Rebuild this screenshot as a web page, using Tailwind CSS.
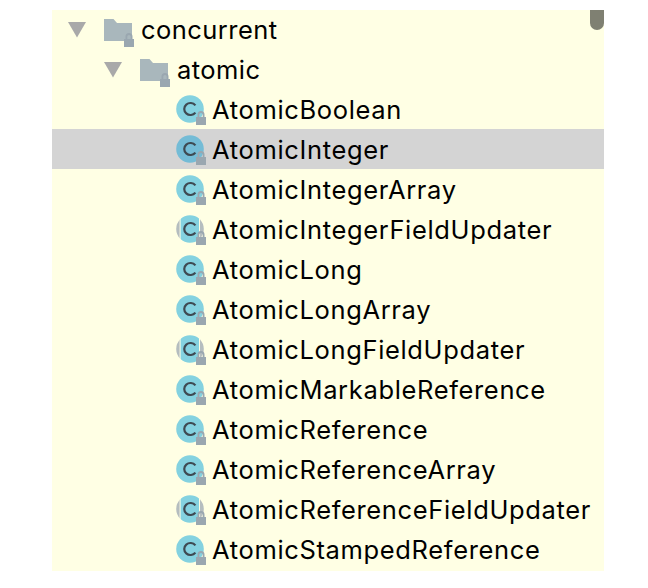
<!DOCTYPE html>
<html lang="en">
<head>
  <meta charset="UTF-8">
  <title>atomic</title>
  <script src="https://cdn.jsdelivr.net/npm/@tailwindcss/browser@4"></script>
</head>
<body class="bg-white">
  <svg class="absolute w-0 h-0" xmlns="http://www.w3.org/2000/svg">
    <defs>
      <clipPath id="band"><rect x="4.6" y="0" width="18.4" height="28"/></clipPath>
      <clipPath id="sides"><rect x="0" y="0" width="3.6" height="28"/><rect x="24" y="0" width="6" height="28"/></clipPath>
      <symbol id="arrow" viewBox="0 0 18 16"><path d="M0 0H18L9 15.5Z" fill="#a9a9a9"/></symbol>
      <symbol id="lock" viewBox="0 0 10 14"><path d="M2.4 7V3.6a2.6 2.6 0 0 1 5.2 0V7" fill="none" stroke="#9aa7b0" stroke-width="1.8"/><rect y="6" width="10" height="8" fill="#9aa7b0"/></symbol>
      <symbol id="folder" viewBox="0 0 30 28">
        <path d="M0 0H9.5L13 4H28V22H0Z" fill="#a9b7bc"/>
        <use href="#lock" x="20" y="14" width="10" height="14"/>
      </symbol>
      <symbol id="cls" viewBox="0 0 30 30">
        <circle cx="14" cy="14" r="13.8" fill="#84d2e0"/>
        <path d="M19.4 10.4a6.2 6 0 1 0 0 7.2" fill="none" stroke="#3e4a52" stroke-width="2.2"/>
        <use href="#lock" x="20" y="16" width="10" height="14"/>
      </symbol>
      <symbol id="cls-sel" viewBox="0 0 30 30">
        <circle cx="14" cy="14" r="13.8" fill="#74bcd6"/>
        <path d="M19.4 10.4a6.2 6 0 1 0 0 7.2" fill="none" stroke="#3e4a52" stroke-width="2.2"/>
        <use href="#lock" x="20" y="16" width="10" height="14"/>
      </symbol>
      <symbol id="cls-abs" viewBox="0 0 30 30">
        <circle cx="14" cy="14" r="13.8" fill="#b5bdbf" clip-path="url(#sides)"/>
        <circle cx="14" cy="14" r="13.8" fill="#84d2e0" clip-path="url(#band)"/>
        <path d="M19.4 10.4a6.2 6 0 1 0 0 7.2" fill="none" stroke="#3e4a52" stroke-width="2.2"/>
        <use href="#lock" x="20" y="16" width="10" height="14"/>
      </symbol>
    </defs>
  </svg>

  <div class="pt-[10px] pl-[52px]">
    <div class="relative w-[552px] h-[561px] bg-[#ffffe4] font-['Inter','Liberation_Sans',sans-serif] text-[25.5px] tracking-[0.65px] text-black">
      <div class="absolute top-0 right-0 w-[14px] h-[20px] bg-[#7f8072] rounded-b-[7px]"></div>

      <div class="flex items-center h-10 pl-4">
        <svg class="w-[18px] h-[16px] mr-[18px]"><use href="#arrow"/></svg>
        <svg class="w-[30px] h-[28px] mt-[6px] mr-[7px]"><use href="#folder"/></svg>
        <span class="mt-[1px] tracking-[0.45px]">concurrent</span>
      </div>
      <div class="flex items-center h-10 pl-[52px] mb-[-1px]">
        <svg class="w-[18px] h-[16px] mr-[18px]"><use href="#arrow"/></svg>
        <svg class="w-[30px] h-[28px] mt-[6px] mr-[7px]"><use href="#folder"/></svg>
        <span class="mt-[1px] tracking-[0.45px]">atomic</span>
      </div>

      <div class="flex items-center h-10 pl-[124px] gap-[6px]"><svg class="w-[30px] h-[30px] mt-[2px]"><use href="#cls"/></svg><span class="mt-[2px]">AtomicBoolean</span></div>
      <div class="flex items-center h-10 pl-[124px] gap-[6px] bg-[#d4d4d4]"><svg class="w-[30px] h-[30px] mt-[2px]"><use href="#cls-sel"/></svg><span class="mt-[2px]">AtomicInteger</span></div>
      <div class="flex items-center h-10 pl-[124px] gap-[6px]"><svg class="w-[30px] h-[30px] mt-[2px]"><use href="#cls"/></svg><span class="mt-[2px]">AtomicIntegerArray</span></div>
      <div class="flex items-center h-10 pl-[124px] gap-[6px]"><svg class="w-[30px] h-[30px] mt-[2px]"><use href="#cls-abs"/></svg><span class="mt-[2px]">AtomicIntegerFieldUpdater</span></div>
      <div class="flex items-center h-10 pl-[124px] gap-[6px]"><svg class="w-[30px] h-[30px] mt-[2px]"><use href="#cls"/></svg><span class="mt-[2px]">AtomicLong</span></div>
      <div class="flex items-center h-10 pl-[124px] gap-[6px]"><svg class="w-[30px] h-[30px] mt-[2px]"><use href="#cls"/></svg><span class="mt-[2px]">AtomicLongArray</span></div>
      <div class="flex items-center h-10 pl-[124px] gap-[6px]"><svg class="w-[30px] h-[30px] mt-[2px]"><use href="#cls-abs"/></svg><span class="mt-[2px]">AtomicLongFieldUpdater</span></div>
      <div class="flex items-center h-10 pl-[124px] gap-[6px]"><svg class="w-[30px] h-[30px] mt-[2px]"><use href="#cls"/></svg><span class="mt-[2px]">AtomicMarkableReference</span></div>
      <div class="flex items-center h-10 pl-[124px] gap-[6px]"><svg class="w-[30px] h-[30px] mt-[2px]"><use href="#cls"/></svg><span class="mt-[2px]">AtomicReference</span></div>
      <div class="flex items-center h-10 pl-[124px] gap-[6px]"><svg class="w-[30px] h-[30px] mt-[2px]"><use href="#cls"/></svg><span class="mt-[2px]">AtomicReferenceArray</span></div>
      <div class="flex items-center h-10 pl-[124px] gap-[6px]"><svg class="w-[30px] h-[30px] mt-[2px]"><use href="#cls-abs"/></svg><span class="mt-[2px]">AtomicReferenceFieldUpdater</span></div>
      <div class="flex items-center h-10 pl-[124px] gap-[6px]"><svg class="w-[30px] h-[30px] mt-[2px]"><use href="#cls"/></svg><span class="mt-[2px]">AtomicStampedReference</span></div>
    </div>
  </div>
</body>
</html>
